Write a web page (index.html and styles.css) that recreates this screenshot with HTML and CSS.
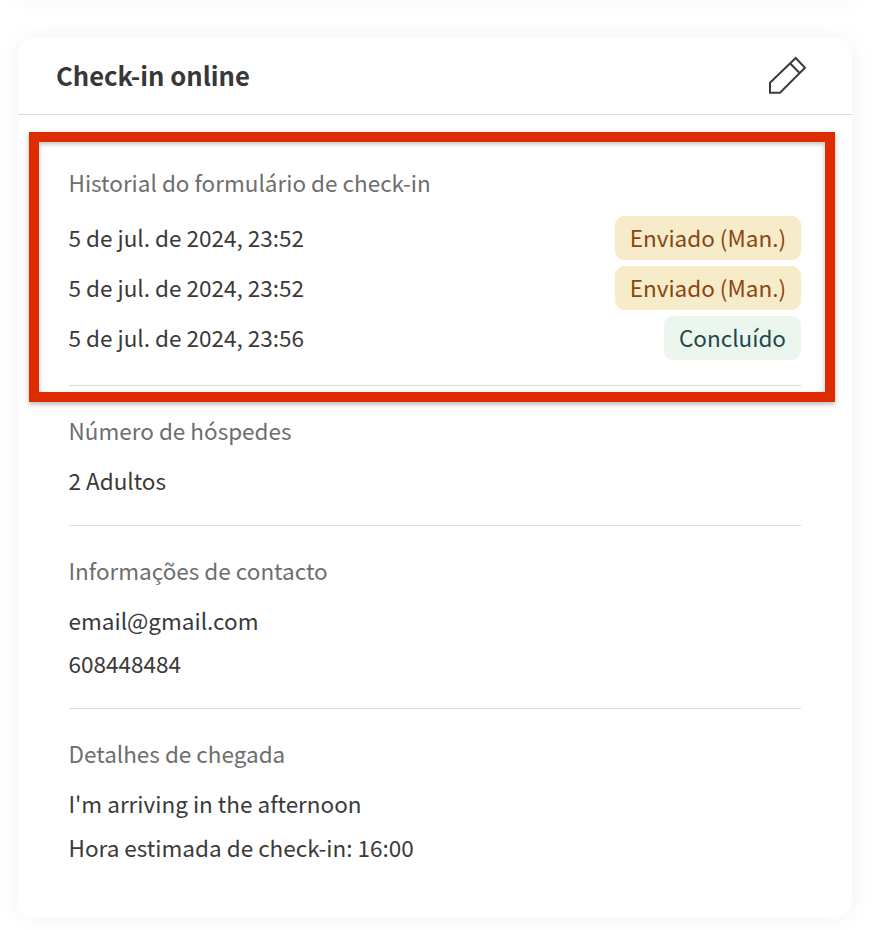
FILE: index.html
```html
<!DOCTYPE html>
<html lang="pt">
<head>
<meta charset="utf-8">
<title>Check-in online</title>
<link rel="stylesheet" href="styles.css">
</head>
<body>
<div class="prev-card"></div>
<main class="card">
  <header class="card-head">
    <h1 class="card-title">Check-in online</h1>
    <svg class="edit-icon" width="38" height="38" viewBox="0 0 38 38" fill="none" stroke="#3c3c3c" stroke-width="2" aria-hidden="true">
      <path d="M2 26.700 L27.700 2 L37 11.700 L12 36.700 L2 36.700 Z"/>
      <path d="M22 7.300 L31.300 16.700"/>
    </svg>
  </header>
  <div class="card-body">
    <section class="group group-history">
      <h2 class="label label-history">Historial do formulário de check-in</h2>
      <div class="history-row"><span class="date">5 de jul. de 2024, 23:52</span><span class="badge badge-sent">Enviado (Man.)</span></div>
      <div class="history-row"><span class="date">5 de jul. de 2024, 23:52</span><span class="badge badge-sent">Enviado (Man.)</span></div>
      <div class="history-row"><span class="date">5 de jul. de 2024, 23:56</span><span class="badge badge-done">Concluído</span></div>
    </section>
    <section class="group">
      <h2 class="label">Número de hóspedes</h2>
      <p class="value">2 Adultos</p>
    </section>
    <section class="group">
      <h2 class="label">Informações de contacto</h2>
      <p class="value">email@gmail.com</p>
      <p class="value">608448484</p>
    </section>
    <section class="group group-last">
      <h2 class="label">Detalhes de chegada</h2>
      <p class="value">I'm arriving in the afternoon</p>
      <p class="value">Hora estimada de check-in: 16:00</p>
    </section>
  </div>
  <div class="highlight"></div>
</main>
</body>
</html>
```
FILE: styles.css
```css
html, body { margin: 0; padding: 0; background: #fff; }
body {
  height: 930px;
  overflow: hidden;
  font-family: "Noto Sans CJK JP", "Noto Sans", sans-serif;
  color: #3a3a3a;
  position: relative;
}
.prev-card {
  height: 10px;
  margin: -10px 18px 38px;
  background: #fff;
  box-shadow: 0 0 20px rgba(0, 0, 0, 0.05);
}
.card {
  position: relative;
  margin: 0 24px 0 18px;
  height: 879px;
  background: #fff;
  border-radius: 16px;
  box-shadow: 0 0 24px rgba(0, 0, 0, 0.055);
}
.card-head {
  height: 77px;
  box-sizing: border-box;
  border-bottom: 1px solid #dcdcdc;
  padding: 0 46px 0 38px;
  display: flex;
  align-items: center;
  justify-content: space-between;
}
.card-title { margin: 0 0 2px; font-size: 25.6px; line-height: 34px; font-weight: 700; color: #383838; }
.edit-icon { display: block; overflow: visible; margin-top: -2px; }
.card-body { padding: 0 51px 0 50.5px; }
.group { border-bottom: 1px solid #dcdcdc; padding: 27px 0 27.7px; }
.group-history { padding: 50px 0 25px; }
.group-last { border-bottom: 0; }
.label { margin: 0 0 16.2px; font-size: 22.5px; line-height: 34px; font-weight: 400; color: #6e6e6e; }
.label-history { margin-bottom: 17px; }
.value { margin: 0 0 9.4px; font-size: 22.5px; line-height: 34px; color: #3a3a3a; }
.value:last-child { margin-bottom: 0; }
.history-row {
  display: flex;
  align-items: center;
  justify-content: space-between;
  height: 44px;
  margin-bottom: 6px;
  font-size: 22.5px;
}
.history-row:last-child { margin-bottom: 0; }
.date { padding-bottom: 2px; }
.badge { height: 44px; line-height: 42px; padding: 0 15px 0 14.5px; border-radius: 9px; box-sizing: border-box; }
.badge-sent { background: #f7ecc9; color: #8a4513; }
.badge-done { background: #ebf6ee; color: #22474a; }
.highlight {
  position: absolute;
  left: 11px;
  top: 94px;
  width: 806px;
  height: 270px;
  box-sizing: border-box;
  border: 10px solid #dd2c00;
  box-shadow: 0 2px 5px rgba(0, 0, 0, 0.3), inset 0 2px 5px rgba(0, 0, 0, 0.25);
}
```
